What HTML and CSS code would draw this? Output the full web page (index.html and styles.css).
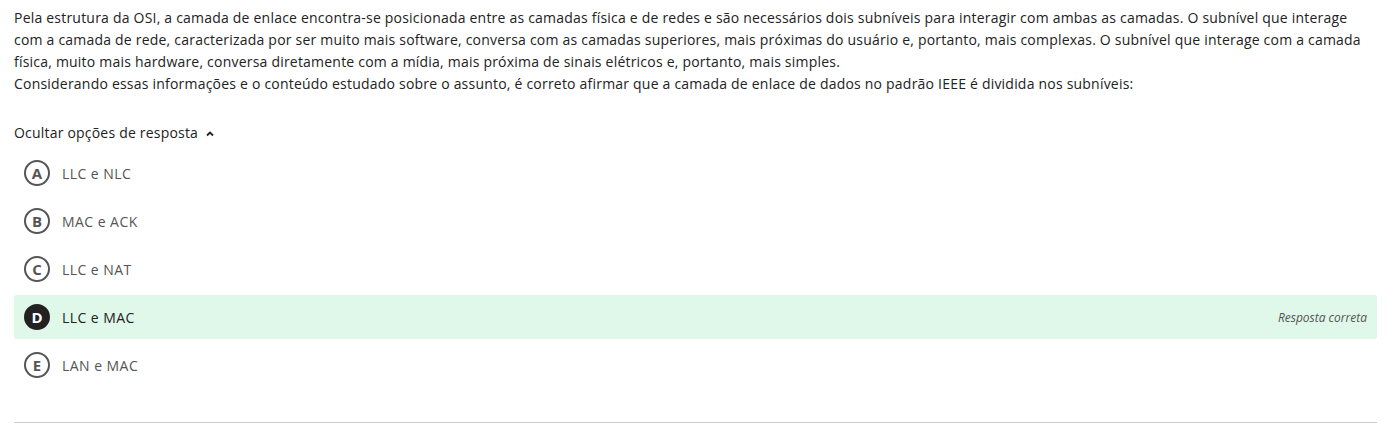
FILE: index.html
```html
<!DOCTYPE html>
<html lang="pt">
<head>
<meta charset="utf-8">
<link rel="stylesheet" href="styles.css">
</head>
<body>
<div class="question">
  <p class="statement">Pela estrutura da OSI, a camada de enlace encontra-se posicionada entre as camadas física e de redes e são necessários dois subníveis para interagir com ambas as camadas. O subnível que interage com a camada de rede, caracterizada por ser muito mais software, conversa com as camadas superiores, mais próximas do usuário e, portanto, mais complexas. O subnível que interage com a camada física, muito mais hardware, conversa diretamente com a mídia, mais próxima de sinais elétricos e, portanto, mais simples.<br>Considerando essas informações e o conteúdo estudado sobre o assunto, é correto afirmar que a camada de enlace de dados no padrão IEEE é dividida nos subníveis:</p>
  <div class="toggle">Ocultar opções de resposta
    <svg class="chev" width="10" height="10" viewBox="0 0 10 10"><path d="M2 6.5 L5 3.5 L8 6.5" fill="none" stroke="#222" stroke-width="1.8"/></svg>
  </div>
  <ul class="options">
    <li class="option"><span class="letter">A</span><span class="label">LLC e NLC</span></li>
    <li class="option"><span class="letter">B</span><span class="label">MAC e ACK</span></li>
    <li class="option"><span class="letter">C</span><span class="label">LLC e NAT</span></li>
    <li class="option correct"><span class="letter">D</span><span class="label">LLC e MAC</span><span class="tag">Resposta correta</span></li>
    <li class="option"><span class="letter">E</span><span class="label">LAN e MAC</span></li>
  </ul>
  <hr class="divider">
</div>
</body>
</html>
```
FILE: styles.css
```css
html, body {
  margin: 0;
  padding: 0;
  background: #fff;
}
body {
  font-family: "Open Sans", "Noto Sans", sans-serif;
  font-size: 14px;
  color: #222;
}
.question {
  padding: 7px 20px 0 14px;
}
.statement {
  margin: 0;
  line-height: 22px;
  letter-spacing: 0.21px;
}
.toggle {
  margin-top: 27px;
  line-height: 22px;
  letter-spacing: 0.2px;
  display: flex;
  align-items: center;
  gap: 7px;
}
.chev {
  margin-top: 2px;
}
.options {
  list-style: none;
  margin: 7px 0 0 0;
  padding: 0;
  display: flex;
  flex-direction: column;
  gap: 4px;
}
.option {
  height: 44px;
  display: flex;
  align-items: center;
  padding: 0 10px;
  border-radius: 3px;
  color: #555;
}
.letter {
  box-sizing: border-box;
  width: 26px;
  height: 26px;
  border-radius: 50%;
  border: 2px solid #555;
  display: flex;
  align-items: center;
  justify-content: center;
  font-weight: 700;
  font-size: 15px;
  color: #555;
  margin-right: 12px;
}
.label {
  flex: 1;
  letter-spacing: 0.45px;
}
.correct {
  background: #dff8ea;
  color: #222;
}
.correct .letter {
  background: #222;
  border-color: #222;
  color: #fff;
}
.tag {
  font-style: italic;
  font-size: 12px;
  color: #555;
}
.divider {
  margin: 35px 0 0 0;
  border: 0;
  border-top: 1px solid #ccc;
}
```
